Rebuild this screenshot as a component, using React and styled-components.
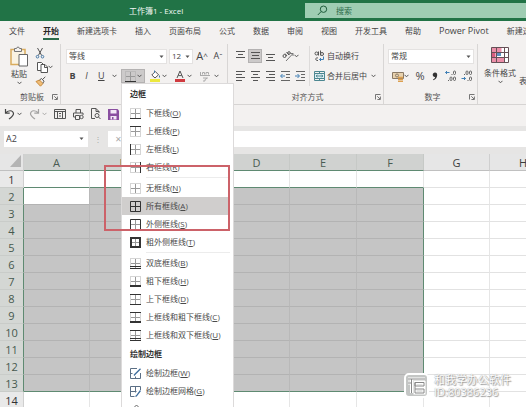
import React from "react";
import styled, { createGlobalStyle, css } from "styled-components";

const GlobalStyle = createGlobalStyle`
  * {
    box-sizing: border-box;
  }
  body {
    margin: 0;
    background: #fff;
    overflow: hidden;
  }
  body, button, input, select {
    font-family: "Open Sans", "Noto Sans CJK SC", sans-serif;
    font-size: 8px;
    line-height: 12px;
    color: #444;
  }
  button, input, select {
    margin: 0;
    padding: 0;
    border: 0;
    border-radius: 0;
    background: none;
    outline: none;
    appearance: none;
  }
  svg {
    display: block;
    flex: none;
  }
`;

const Window = styled.div`
  position: relative;
  display: flex;
  flex-direction: column;
  height: 100vh;
  overflow: hidden;
  > * {
    flex-shrink: 0;
  }
`;

/* title bar */
const TitleBar = styled.header`
  display: flex;
  justify-content: flex-end;
  align-items: center;
  height: 21px;
  background: #217346;
`;
const DocTitle = styled.h1`
  flex: 1;
  margin: 0;
  padding-left: 7px;
  text-align: center;
  font-size: 8px;
  font-weight: 400;
  color: #f0f7f3;
`;
const Search = styled.label`
  display: flex;
  align-items: center;
  gap: 8px;
  width: 42%;
  height: 15px;
  padding-left: 12px;
  background: #9fcdb3;
`;
const SearchInput = styled.input`
  flex: 1;
  min-width: 0;
  &::placeholder {
    color: #2c6b49;
    opacity: 1;
  }
`;

/* ribbon tabs */
const Tabs = styled.nav`
  display: flex;
  gap: 18px;
  height: 23px;
  padding: 4px 0 0 9px;
  overflow: hidden;
  background: #f3f1f0;
`;
const Tab = styled.a`
  flex: none;
  height: 15px;
  font-size: ${(props) => (props.$latin ? 9 : 8)}px;
  color: #444;
  text-decoration: none;
  white-space: nowrap;
  ${(props) =>
    props.$active &&
    css`
      font-weight: 700;
      color: #262626;
      border-bottom: 2px solid #2b6a4a;
    `}
`;

/* ribbon */
const Ribbon = styled.div`
  display: flex;
  height: 61px;
  background: #f3f1f0;
  border-bottom: 1px solid #d6d4d3;
`;
const Group = styled.section`
  flex: none;
  display: flex;
  flex-direction: column;
  width: ${(props) => props.$width}px;
  padding-top: 2px;
  border-right: 1px solid #d8d6d5;
  &:last-child {
    flex: 1 0 0;
    border-right: 0;
  }
`;
const GroupBody = styled.div`
  display: flex;
  height: 40px;
`;
const GroupFooter = styled.div`
  display: flex;
  align-items: center;
  height: 18px;
  padding: 4px 2px 0 12px;
  color: #555;
`;
const GroupName = styled.span`
  flex: 1;
  text-align: center;
  white-space: nowrap;
`;
const Column = styled.div`
  display: flex;
  flex-direction: column;
  width: ${(props) => (props.$width ? `${props.$width}px` : "auto")};
  padding-left: ${(props) => props.$pad || 0}px;
  border-right: ${(props) => (props.$divided ? "1px solid #dddbda" : "0")};
`;
const Row = styled.div`
  display: flex;
  align-items: center;
  gap: ${(props) => props.$gap || 0}px;
  height: 20px;
`;
const ToolButton = styled.button`
  flex: none;
  display: flex;
  align-items: center;
  justify-content: center;
  width: ${(props) => props.$width || 14}px;
  height: 14px;
  background: ${(props) => (props.$pressed ? "#cccaca" : "none")};
  outline: ${(props) => (props.$pressed ? "1px solid #b4b2b2" : "none")};
  outline-offset: -1px;
`;
const SplitButton = styled(ToolButton)`
  justify-content: space-between;
  width: ${(props) => props.$width || 24}px;
  padding: 0 3px 0 4px;
`;
const TextButton = styled.button`
  display: flex;
  align-items: center;
  gap: 2px;
  height: 14px;
  white-space: nowrap;
`;
const BigButton = styled.button`
  display: flex;
  flex-direction: column;
  align-items: center;
  gap: 1px;
  width: ${(props) => props.$width}px;
  white-space: nowrap;
`;
const Letter = styled.span`
  font-size: ${(props) => props.$size || 9}px;
  font-weight: ${(props) => (props.$bold ? 700 : 400)};
  font-style: ${(props) => (props.$italic ? "italic" : "normal")};
  text-decoration: ${(props) => (props.$underline ? "underline" : "none")};
`;
const SelectBox = styled.div`
  position: relative;
  width: ${(props) => props.$width}px;
  height: 15px;
  background: #fff;
  border: 1px solid #e4e2e1;
  svg {
    position: absolute;
    right: 2px;
    top: 5px;
    pointer-events: none;
  }
`;
const Select = styled.select`
  display: block;
  width: 100%;
  height: 13px;
  padding-left: 2px;
`;
const StylesBody = styled(GroupBody)`
  gap: 3px;
  padding-left: 6px;
  overflow: hidden;
`;
const CutOff = styled.span`
  padding-top: 29px;
  white-space: nowrap;
`;

/* borders menu */
const MenuAnchor = styled.div`
  position: relative;
`;
const Menu = styled.div`
  position: absolute;
  z-index: 5;
  top: 100%;
  left: 0;
  width: 113px;
  padding-right: 3px;
  background: #fff;
  border: 1px solid #dcdada;
`;
const MenuTitle = styled.div`
  height: 20px;
  padding: 4px 0 0 8px;
  font-weight: 700;
  color: #333;
`;
const MenuItem = styled.button`
  display: flex;
  align-items: center;
  gap: 5px;
  width: 100%;
  height: 18px;
  padding-left: 8px;
  white-space: nowrap;
  color: #4a4a4a;
  background: ${(props) => (props.$active ? "#d0cecd" : "none")};
`;
const MenuRule = styled.hr`
  height: 1px;
  margin: 1px 0 1px 24px;
  border: 0;
  background: #ececec;
`;

/* quick access + formula bar */
const QuickBar = styled.div`
  display: flex;
  align-items: center;
  gap: 7px;
  height: 21px;
  padding: 0 0 3px 4px;
  background: #f3f1f0;
`;
const QuickButton = styled.button`
  display: flex;
  align-items: center;
  gap: 2px;
  opacity: ${(props) => (props.$faded ? 0.45 : 1)};
`;
const FormulaBar = styled.div`
  display: flex;
  align-items: center;
  height: 28px;
  padding: 0 0 2px 4px;
  background: #e6e5e4;
`;
const NameBox = styled.label`
  display: flex;
  align-items: center;
  width: 84px;
  height: 16px;
  padding: 0 4px 0 2px;
  background: #fff;
`;
const NameInput = styled.input`
  flex: 1;
  min-width: 0;
  font-size: 9px;
`;
const Dots = styled.span`
  width: 20px;
  text-align: center;
  color: #aaa;
`;
const FormulaBox = styled.label`
  flex: 1;
  display: flex;
  align-items: center;
  height: 16px;
  background: #fff;
`;
const FormulaInput = styled.input`
  flex: 1;
  min-width: 0;
  padding-left: 8px;
`;

/* sheet */
const SHEET_GREEN = "#5f8a72";

const Sheet = styled.table`
  flex: none;
  width: max-content;
  table-layout: fixed;
  border-collapse: separate;
  border-spacing: 0;
`;
const Corner = styled.th`
  width: 24px;
  height: 17px;
  padding: 0 2px 2px 0;
  background: #e6e6e6;
  border-right: 1px solid #cfcfcf;
  border-bottom: 1px solid #c0c0c0;
  svg {
    margin-left: auto;
  }
`;
const ColHead = styled.th`
  width: ${(props) => props.$width}px;
  height: 17px;
  padding: 0;
  font-size: 11px;
  line-height: 15px;
  font-weight: 400;
  color: ${(props) => (props.$selected ? "#4a5c52" : "#3c3c3c")};
  background: ${(props) => (props.$selected ? "#d0d2d0" : "#e6e6e6")};
  border-right: 1px solid ${(props) => (props.$selected ? "#c6c9c6" : "#cfcfcf")};
  border-bottom: 1px solid ${(props) => (props.$selected ? SHEET_GREEN : "#c0c0c0")};
`;
const RowHead = styled.th`
  height: 17px;
  padding: 0;
  font-size: 11px;
  line-height: 15px;
  font-weight: 400;
  color: ${(props) => (props.$selected ? "#46594e" : "#333")};
  background: ${(props) => (props.$selected ? "#d4d7d4" : "#e9e9e9")};
  border-right: 1px solid ${(props) => (props.$selected ? SHEET_GREEN : "#cfcfcf")};
  border-bottom: 1px solid #c9ccc9;
`;
const Cell = styled.td`
  height: 17px;
  padding: 0;
  background: ${(props) => (props.$selected ? "#c5c5c5" : "#fff")};
  border-right: 1px solid ${(props) => (props.$selected ? "#b9b9b9" : "#e6e6e6")};
  border-bottom: 1px solid ${(props) => (props.$selected ? "#b3b3b3" : "#e2e2e2")};
  ${(props) => props.$lineRight && `border-right-color: ${SHEET_GREEN};`}
  ${(props) => props.$lineBottom && `border-bottom-color: ${SHEET_GREEN};`}
  ${(props) => props.$current && "background: #fff;"}
`;

/* overlays */
const Highlight = styled.div`
  position: absolute;
  z-index: 6;
  left: 104px;
  top: 165px;
  width: 126px;
  height: 66px;
  border: 2px solid #cc6269;
  pointer-events: none;
`;
const Watermark = styled.div`
  position: absolute;
  right: 15px;
  bottom: 9px;
  display: flex;
  align-items: center;
  gap: 5px;
`;
const WatermarkText = styled.div`
  display: flex;
  flex-direction: column;
  font-size: 11px;
  line-height: 12px;
  color: #fff;
  text-shadow: 0 0 1px #888, 1px 1px 1px #999;
  white-space: nowrap;
`;

const Chevron = () => (
  <svg width="5" height="4" viewBox="0 0 5 4" fill="none" stroke="#555">
    <path d="M.5 .8 2.5 2.8 4.5 .8" />
  </svg>
);

const Caret = () => (
  <svg width="5" height="4" viewBox="0 0 5 4" fill="#555">
    <path d="M.5 .5h4L2.500 3z" />
  </svg>
);

const Launcher = () => (
  <svg width="6" height="6" viewBox="0 0 6 6" fill="none" stroke="#666" strokeWidth=".9">
    <path d="M.5 5.500V.5H5.500M2.300 2.300 5 5M5.400 2.500v3h-3" />
  </svg>
);

const SearchIcon = () => (
  <svg width="11" height="11" viewBox="0 0 11 11" fill="none" stroke="#1f5c3b">
    <circle cx="6.500" cy="4.200" r="3.200" />
    <path d="M4.200 6.500.8 10" />
  </svg>
);

const PasteIcon = () => (
  <svg width="20" height="21" viewBox="0 0 20 21" fill="none">
    <path d="M2 3.500h14v15H2z" fill="#faf3e2" stroke="#d9ac5e" strokeWidth="1.500" />
    <path d="M5.500 5.500v-3h2C7.500.6 10.500.6 10.500 2.500h2v3z" fill="#f3f1f0" stroke="#777" />
    <path d="M10 8.500h8.500v11.500H10z" fill="#fff" stroke="#666" />
  </svg>
);

const CutIcon = () => (
  <svg width="10" height="12" viewBox="0 0 10 12" fill="none" stroke="#555">
    <path d="M2.500 1 6.700 8.500M7.500 1 3.300 8.500" />
    <circle cx="2.500" cy="9.700" r="1.300" stroke="#4a7ba8" />
    <circle cx="7.500" cy="9.700" r="1.300" stroke="#4a7ba8" />
  </svg>
);

const CopyIcon = () => (
  <svg width="11" height="11" viewBox="0 0 11 11" fill="#fff" stroke="#555">
    <path d="M4 8.500H.5v-8h4L6 2" />
    <path d="M4 2.500h4L10.500 5v5.500H4zM7.500 2.500V5.500h3" />
  </svg>
);

const BrushIcon = () => (
  <svg width="11" height="11" viewBox="0 0 11 11" fill="none">
    <path d="M1 5.500 4.500 4 8 7.500 5.500 10.200z" fill="#f0bd77" stroke="#c98b3d" />
    <path d="M4.500 4 6.500 2.500 9 5.200 7.800 7.300M7.500 3.500 10.300.8" stroke="#555" />
  </svg>
);

const FillIcon = () => (
  <svg width="11" height="12" viewBox="0 0 11 12" fill="none">
    <path d="M0 9h10v3H0z" fill="#ece83e" />
    <path d="M1.800 5 5.300 1.500 8.500 4.800 5 8z" fill="#fff" stroke="#555" />
    <path d="M4.500 3V.5M9.500 5.500v2" stroke="#477ba5" />
  </svg>
);

const FontColorIcon = () => (
  <svg width="11" height="12" viewBox="0 0 11 12" fill="none">
    <path d="M0 9h10v3H0z" fill="#d03a40" />
    <path d="M2 8 5 1 8 8M3.200 5.600h3.600" stroke="#555" />
  </svg>
);

const PhoneticIcon = () => (
  <svg width="10" height="11" viewBox="0 0 10 11" fill="none" stroke="#aaa">
    <path d="M.5 1v3M2.500 3.500v-2h2v2M6 3.500v-2h2.500v2M0 4.500h10M3 7h4.500L5 8.500V10H3" />
  </svg>
);

const LINES = {
  top: ["M1 1.500h9", "M3 4.500h5", "M1 7.500h9"],
  middle: ["M1 2.500h9", "M2 5.500h7", "M1 8.500h9"],
  bottom: ["M1 4.500h9", "M3 7.500h5", "M1 10.500h9"],
  left: ["M1 1.500h9M1 7.500h9", "M1 4.500h6M1 10.500h6"],
  center: ["M1 1.500h9M1 7.500h9", "M3 4.500h5M3 10.500h5"],
  right: ["M1 1.500h9M1 7.500h9", "M4 4.500h6M4 10.500h6"],
};

const LinesIcon = ({ kind }) => (
  <svg width="11" height="12" viewBox="0 0 11 12" stroke="#555">
    <path d={LINES[kind].join("")} />
  </svg>
);

const IndentIcon = ({ flip }) => (
  <svg width="11" height="12" viewBox="0 0 11 12" fill="none" stroke="#666">
    <path d="M1 1.500h9M6 4.500h4M6 7.500h4M1 10.500h9" />
    <path d={flip ? "M0 6h4M2.500 4 4.500 6 2.500 8" : "M1 6h4M2.500 4 .5 6 2.500 8"} stroke="#3f7fb5" />
  </svg>
);

const OrientIcon = () => (
  <svg width="12" height="12" viewBox="0 0 12 12" fill="none" stroke="#555">
    <path d="M4 11 11 3.500M8.500 3.500H11V6" stroke="#777" />
    <circle cx="2.500" cy="6" r="1.500" />
    <path d="M3 3.500 5 6M4.500 2 7 5" />
    <circle cx="7" cy="3" r="1.300" />
  </svg>
);

const WrapIcon = () => (
  <svg width="11" height="12" viewBox="0 0 11 12" fill="none" stroke="#555">
    <circle cx="2.500" cy="3.500" r="1.500" />
    <path d="M4.500 1.500v4M6.500.5v5" />
    <circle cx="8" cy="4" r="1.500" />
    <path d="M4 8C1 7 1 11 4 10.500" />
    <path d="M9.500 6.500V9.500H5.500M7 8 5.500 9.500 7 11" stroke="#3f7fb5" />
  </svg>
);

const MergeIcon = () => (
  <svg width="11" height="12" viewBox="0 0 11 12" fill="none" stroke="#4c8791">
    <path d="M.5 1.500h10v9H.5zM5.500 1.500v2M5.500 8.500v2" />
    <path d="M.5 3.500h10v5H.5z" fill="#dceef3" />
    <path d="M2 6h7M3.500 4.700 2.200 6 3.500 7.300M7.500 4.700 8.800 6 7.500 7.300" />
  </svg>
);

const CurrencyIcon = () => (
  <svg width="12" height="11" viewBox="0 0 12 11" fill="none">
    <path d="M.5 1.500h11v6H.5z" fill="#e8d2ae" stroke="#8a7a66" />
    <circle cx="5" cy="4.500" r="1.500" stroke="#8a7a66" />
    <path d="M6 6.500h5M6 8.500h5M6 10.300h5" stroke="#dca050" strokeWidth="1.300" />
  </svg>
);

const CommaIcon = () => (
  <svg width="6" height="9" viewBox="0 0 6 9" fill="#333">
    <path d="M3 .5C4.700.5 5.300 1.800 5.200 3.300 5 5.800 3.500 7.600 1.300 8.300L1 7.500C2.300 6.900 3 6 3.100 4.900 1.700 5.100.7 4.100.7 2.800.7 1.500 1.700.5 3 .5z" />
  </svg>
);

const DecimalIcon = ({ less }) => (
  <svg width="12" height="12" viewBox="0 0 12 12" fill="none" stroke="#666">
    <path d={less ? "M.5 8.500H4.500M3 7 4.500 8.500 3 10" : "M.5 2.500H4.500M2 1 .5 2.500 2 4"} stroke="#3f7fb5" />
    <rect x="8.500" y="1" width="2" height="3.500" rx="1" />
    <rect x="8.500" y="7" width="2" height="3.500" rx="1" />
    {less ? <rect x="5" y="1" width="2" height="3.500" rx="1" /> : <rect x="5" y="7" width="2" height="3.500" rx="1" />}
    <path d={less ? "M3 4.500h1M6.500 10.500h1" : "M6.500 4.500h1M3 10.500h1"} />
  </svg>
);

const ConditionalIcon = () => (
  <svg width="20" height="20" viewBox="0 0 20 20" fill="none">
    <path d="M1.500 1.500h17v15h-17z" fill="#fff" />
    <path d="M1.500 1.500h10v5h-10zM1.500 11.500h13v5h-13z" fill="#ec8fa9" />
    <path d="M1.500 6.500h4v5h-4z" fill="#d95c7e" />
    <path d="M7 7h4v3h-4z" fill="#5d8fc0" />
    <path d="M1.500 1.500h17v15h-17zM1.500 6.500h17M1.500 11.500h17M6.500 1.500v15M14.500 1.500v15" stroke="#665057" />
  </svg>
);

const UndoIcon = ({ flip }) => (
  <svg width="11" height="12" viewBox="0 0 11 12" fill="none" stroke="#444" strokeWidth="1.200">
    <path
      d="M1.500 1v4.200H5.700M1.500 5.200C4 1.800 9 2 9.500 5.500 9.600 8 7 9.500 5 11"
      transform={flip ? "matrix(-1 0 0 1 11 0)" : undefined}
    />
  </svg>
);

const FrameIcon = () => (
  <svg width="12" height="10" viewBox="0 0 12 10" fill="none" stroke="#555">
    <path d="M.5 .5h11v9H.5zM.5 2.500h11M3.500 2.500v7M8.500 2.500v7M5 4.500h2M5 7h2" />
  </svg>
);

const PrintIcon = () => (
  <svg width="11" height="11" viewBox="0 0 11 11" fill="none" stroke="#555">
    <path d="M3 4V.5h4.500V4M2.500 8H.5V4h9.500v2M2.500 6.500h4v4h-4z" />
    <circle cx="8.500" cy="8" r="1.700" />
  </svg>
);

const PreviewIcon = () => (
  <svg width="10" height="12" viewBox="0 0 10 12" fill="none" stroke="#555">
    <path d="M4 10.500H.5V.5h4.500L8 3.500V5M5 .5v3h3" />
    <circle cx="6" cy="7.500" r="2" />
    <path d="M7.500 9 9.500 11" />
  </svg>
);

const SaveIcon = () => (
  <svg width="11" height="11" viewBox="0 0 11 11">
    <path d="M0 0h9.500L11 1.500V11H0z" fill="#8a4fa0" />
    <path d="M2.500 1h6v3.500h-6zM2.500 7h6v3.500h-6z" fill="#f3e9f7" />
    <path d="M4 8h1.500v2.500H4z" fill="#8a4fa0" />
  </svg>
);

const CornerIcon = () => (
  <svg width="11" height="12" viewBox="0 0 11 12">
    <path d="M11 0v12H0z" fill="#b4b4b4" />
  </svg>
);

// solid strokes laid over the dotted grid, one per border preset
const BORDER_STROKES = {
  bottom: { d: "M0 10.500h11" },
  top: { d: "M0 .5h11" },
  left: { d: "M.5 0v11" },
  right: { d: "M10.500 0v11" },
  none: { d: "" },
  all: { d: "M.5 .5h10v10H.5zM5.500 0v11M0 5.500h11" },
  outside: { d: "M.5 .5h10v10H.5z" },
  thick: { d: "M1 1h9v9H1z", width: 2 },
  doubleBottom: { d: "M0 8.500h11M0 10.500h11" },
  thickBottom: { d: "M0 10h11", width: 2 },
  topBottom: { d: "M0 .5h11M0 10.500h11" },
  topThick: { d: "M0 .5h11M0 9.500h11M0 10.500h11" },
  topDouble: { d: "M0 .5h11M0 8.500h11M0 10.500h11" },
};

const BorderIcon = ({ kind }) => {
  const stroke = BORDER_STROKES[kind];
  return (
    <svg width="11" height="11" viewBox="0 0 11 11" fill="none">
      <path d="M.5 .5h10v10H.5z" stroke="#aaa" strokeDasharray="1 1" />
      <path d="M5.500 1v9M1 5.500h9" stroke="#999" />
      <path d={stroke.d} stroke="#333" strokeWidth={stroke.width || 1} />
    </svg>
  );
};

const DrawIcon = ({ grid }) => (
  <svg width="11" height="11" viewBox="0 0 11 11" fill="none">
    <path d={grid ? "M10.500 4V.5H.5v10h4M.5 5.500h6M5.500 .5v6" : "M7 .5H.5v10h10V5M.5 5.500h2M5.500 8.500v2"} stroke="#5b6f85" />
    <path d={grid ? "M10.500 4.500 6.500 9.800 5.500 10.500" : "M10.500 .8 5 6.300 4 7.500"} stroke="#3d6c9c" strokeWidth="1.300" />
  </svg>
);

const EraseIcon = () => (
  <svg width="11" height="11" viewBox="0 0 11 11" fill="none" stroke="#666">
    <path d="M6.500 1 10 4.500 4.500 10 1 6.500zM3.500 4 7 7.500" />
  </svg>
);

const LogoIcon = () => (
  <svg width="25" height="25" viewBox="0 0 25 25" fill="none">
    <rect x="1" y="1" width="23" height="23" rx="4" fill="#c4c6c5" stroke="#fff" strokeWidth="2" />
    <path d="M4 6h17M7.500 6v14M4 10h3M11 9.500h9v3.500h-9zM11 9.500V20h9v-4h-9" stroke="#fff" strokeWidth="3" />
    <path d="M4 6h17M7.500 6v14M4 10h3M11 9.500h9v3.500h-9zM11 9.500V20h9v-4h-9" stroke="#888" />
  </svg>
);

const tabs = ["文件", "开始", "新建选项卡", "插入", "页面布局", "公式", "数据", "审阅", "视图", "开发工具", "帮助", "Power Pivot", "新建选项卡"];

const borderItems = [
  ["bottom", "下框线", "O"],
  ["top", "上框线", "P"],
  ["left", "左框线", "L"],
  ["right", "右框线", "R"],
  null,
  ["none", "无框线", "N"],
  ["all", "所有框线", "A"],
  ["outside", "外侧框线", "S"],
  ["thick", "粗外侧框线", "T"],
  null,
  ["doubleBottom", "双底框线", "B"],
  ["thickBottom", "粗下框线", "H"],
  ["topBottom", "上下框线", "D"],
  ["topThick", "上框线和粗下框线", "C"],
  ["topDouble", "上框线和双下框线", "U"],
];

const columns = [
  ["A", 66],
  ["B", 67],
  ["C", 67],
  ["D", 66],
  ["E", 67],
  ["F", 67],
  ["G", 66],
  ["H", 67],
];
const rows = Array.from({ length: 14 }, (_, i) => i + 1);
const selection = { lastCol: 5, firstRow: 2, lastRow: 13 };

const BordersMenu = () => (
  <Menu role="menu">
    <MenuTitle>边框</MenuTitle>
    {borderItems.map((item, i) =>
      item ? (
        <MenuItem key={item[0]} role="menuitem" $active={item[0] === "all"}>
          <BorderIcon kind={item[0]} />
          <span>
            {item[1]}(<u>{item[2]}</u>)
          </span>
        </MenuItem>
      ) : (
        <MenuRule key={i} />
      )
    )}
    <MenuTitle>绘制边框</MenuTitle>
    <MenuItem role="menuitem">
      <DrawIcon />
      <span>绘制边框(<u>W</u>)</span>
    </MenuItem>
    <MenuItem role="menuitem">
      <DrawIcon grid />
      <span>绘制边框网格(<u>G</u>)</span>
    </MenuItem>
    <MenuItem role="menuitem" aria-label="擦除边框">
      <EraseIcon />
    </MenuItem>
  </Menu>
);

const SheetGrid = () => (
  <Sheet>
    <thead>
      <tr>
        <Corner>
          <CornerIcon />
        </Corner>
        {columns.map(([name, width], c) => (
          <ColHead key={name} $width={width} $selected={c <= selection.lastCol}>
            {name}
          </ColHead>
        ))}
      </tr>
    </thead>
    <tbody>
      {rows.map((row) => {
        const inRows = row >= selection.firstRow && row <= selection.lastRow;
        return (
          <tr key={row}>
            <RowHead $selected={inRows}>{row}</RowHead>
            {columns.map(([name], c) => {
              const inCols = c <= selection.lastCol;
              return (
                <Cell
                  key={name}
                  $selected={inRows && inCols}
                  $current={row === 2 && c === 0}
                  $lineRight={inRows && c === selection.lastCol}
                  $lineBottom={inCols && (row === selection.firstRow - 1 || row === selection.lastRow)}
                />
              );
            })}
          </tr>
        );
      })}
    </tbody>
  </Sheet>
);

const App = () => {
  return (
    <Window>
      <GlobalStyle />
      <TitleBar>
        <DocTitle>工作簿1 - Excel</DocTitle>
        <Search>
          <SearchIcon />
          <SearchInput placeholder="搜索" aria-label="搜索" />
        </Search>
      </TitleBar>

      <Tabs>
        {tabs.map((tab, i) => (
          <Tab key={i} href="#" $active={i === 1} $latin={tab === "Power Pivot"}>
            {tab}
          </Tab>
        ))}
      </Tabs>

      <Ribbon>
        <Group $width={61}>
          <GroupBody>
            <Column $width={32} $pad={6}>
              <BigButton $width={26}>
                <PasteIcon />
                粘贴
                <Chevron />
              </BigButton>
            </Column>
            <Column $pad={1}>
              <ToolButton aria-label="剪切">
                <CutIcon />
              </ToolButton>
              <SplitButton aria-label="复制" $width={22}>
                <CopyIcon />
                <Chevron />
              </SplitButton>
              <ToolButton aria-label="格式刷">
                <BrushIcon />
              </ToolButton>
            </Column>
          </GroupBody>
          <GroupFooter>
            <GroupName>剪贴板</GroupName>
            <Launcher />
          </GroupFooter>
        </Group>

        <Group $width={167}>
          <Column $pad={5}>
            <Row $gap={2}>
              <SelectBox $width={101}>
                <Select aria-label="字体">
                  <option>等线</option>
                </Select>
                <Caret />
              </SelectBox>
              <SelectBox $width={24}>
                <Select aria-label="字号">
                  <option>12</option>
                </Select>
                <Caret />
              </SelectBox>
              <ToolButton aria-label="增大字号">
                <Letter $size={11}>A</Letter>
                <Letter $size={8}>^</Letter>
              </ToolButton>
              <ToolButton aria-label="减小字号">
                <Letter $size={9}>A</Letter>
                <Letter $size={8}>ˇ</Letter>
              </ToolButton>
            </Row>
            <Row $gap={1}>
              <ToolButton $width={13}>
                <Letter $bold>B</Letter>
              </ToolButton>
              <ToolButton $width={13}>
                <Letter $italic>I</Letter>
              </ToolButton>
              <SplitButton $width={26}>
                <Letter $underline>U</Letter>
                <Chevron />
              </SplitButton>
              <MenuAnchor>
                <SplitButton aria-label="边框" $pressed>
                  <BorderIcon kind="bottom" />
                  <Chevron />
                </SplitButton>
                <BordersMenu />
              </MenuAnchor>
              <SplitButton aria-label="填充颜色">
                <FillIcon />
                <Chevron />
              </SplitButton>
              <SplitButton aria-label="字体颜色">
                <FontColorIcon />
                <Chevron />
              </SplitButton>
              <SplitButton aria-label="拼音" $width={26}>
                <PhoneticIcon />
                <Chevron />
              </SplitButton>
            </Row>
          </Column>
        </Group>

        <Group $width={156}>
          <GroupBody>
            <Column $width={82} $pad={5} $divided>
              <Row $gap={1}>
                <ToolButton aria-label="顶端对齐">
                  <LinesIcon kind="top" />
                </ToolButton>
                <ToolButton aria-label="垂直居中" $pressed>
                  <LinesIcon kind="middle" />
                </ToolButton>
                <ToolButton aria-label="底端对齐">
                  <LinesIcon kind="bottom" />
                </ToolButton>
                <SplitButton aria-label="方向">
                  <OrientIcon />
                  <Chevron />
                </SplitButton>
              </Row>
              <Row $gap={1}>
                <ToolButton aria-label="左对齐">
                  <LinesIcon kind="left" />
                </ToolButton>
                <ToolButton aria-label="居中">
                  <LinesIcon kind="center" />
                </ToolButton>
                <ToolButton aria-label="右对齐">
                  <LinesIcon kind="right" />
                </ToolButton>
                <ToolButton aria-label="减少缩进量">
                  <IndentIcon />
                </ToolButton>
                <ToolButton aria-label="增加缩进量">
                  <IndentIcon flip />
                </ToolButton>
              </Row>
            </Column>
            <Column $pad={4}>
              <Row>
                <TextButton>
                  <WrapIcon />
                  自动换行
                </TextButton>
              </Row>
              <Row $gap={4}>
                <TextButton>
                  <MergeIcon />
                  合并后居中
                </TextButton>
                <Chevron />
              </Row>
            </Column>
          </GroupBody>
          <GroupFooter>
            <GroupName>对齐方式</GroupName>
            <Launcher />
          </GroupFooter>
        </Group>

        <Group $width={94}>
          <Column $pad={4}>
            <Row>
              <SelectBox $width={86}>
                <Select aria-label="数字格式">
                  <option>常规</option>
                </Select>
                <Caret />
              </SelectBox>
            </Row>
            <Row $gap={1}>
              <SplitButton aria-label="会计数字格式">
                <CurrencyIcon />
                <Chevron />
              </SplitButton>
              <ToolButton>
                <Letter $size={11}>%</Letter>
              </ToolButton>
              <ToolButton aria-label="千位分隔样式">
                <CommaIcon />
              </ToolButton>
              <ToolButton aria-label="增加小数位数" $width={15}>
                <DecimalIcon />
              </ToolButton>
              <ToolButton aria-label="减少小数位数" $width={15}>
                <DecimalIcon less />
              </ToolButton>
            </Row>
          </Column>
          <GroupFooter>
            <GroupName>数字</GroupName>
            <Launcher />
          </GroupFooter>
        </Group>

        <Group>
          <StylesBody>
            <BigButton $width={32}>
              <ConditionalIcon />
              条件格式
              <Chevron />
            </BigButton>
            <CutOff>表格</CutOff>
          </StylesBody>
        </Group>
      </Ribbon>

      <QuickBar>
        <QuickButton aria-label="撤消">
          <UndoIcon />
          <Chevron />
        </QuickButton>
        <QuickButton aria-label="恢复" $faded>
          <UndoIcon flip />
          <Chevron />
        </QuickButton>
        <QuickButton aria-label="边框">
          <FrameIcon />
        </QuickButton>
        <QuickButton aria-label="打印">
          <PrintIcon />
        </QuickButton>
        <QuickButton aria-label="打印预览">
          <PreviewIcon />
        </QuickButton>
        <QuickButton aria-label="保存">
          <SaveIcon />
        </QuickButton>
      </QuickBar>

      <FormulaBar>
        <NameBox>
          <NameInput aria-label="名称框" defaultValue="A2" />
          <Caret />
        </NameBox>
        <Dots>⋮</Dots>
        <FormulaBox>
          <Dots>✕</Dots>
          <FormulaInput aria-label="编辑栏" />
        </FormulaBox>
      </FormulaBar>

      <SheetGrid />

      <Highlight />
      <Watermark>
        <LogoIcon />
        <WatermarkText>
          <span>和我学办公软件</span>
          <span>ID:80386236</span>
        </WatermarkText>
      </Watermark>
    </Window>
  );
};

export default App;
